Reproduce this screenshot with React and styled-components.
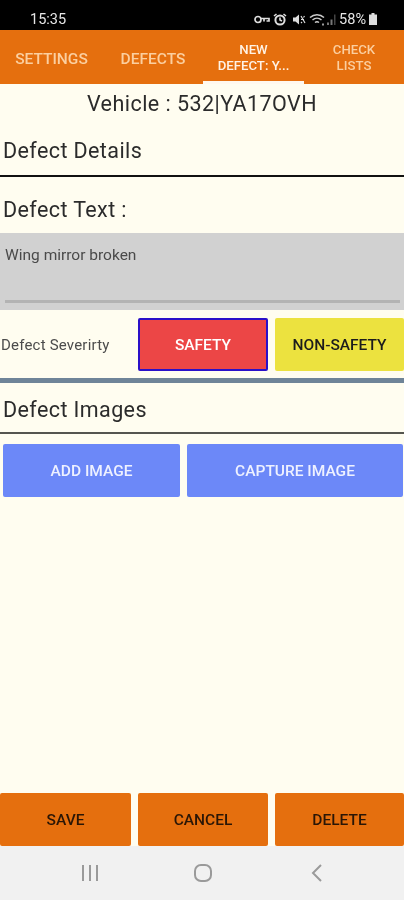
import React from "react";
import styled, { createGlobalStyle } from "styled-components";

const Global = createGlobalStyle`
  html, body { margin: 0; padding: 0; background: #fffdf0; }
  * { box-sizing: border-box; }
`;

const Screen = styled.div`
  width: 404px;
  height: 900px;
  display: flex;
  flex-direction: column;
  overflow: hidden;
  background: #fffdf0;
  font-family: Roboto, "Liberation Sans", sans-serif;
  color: #2b2b2b;
  filter: blur(0.45px);
`;

const StatusBar = styled.div`
  height: 30px;
  flex: none;
  background: #000;
  color: #e6e6e6;
  display: flex;
  align-items: center;
  justify-content: space-between;
  padding: 8px 27px 0 30px;
  font-size: 14.5px;
`;

const StatusRight = styled.div`
  display: flex;
  align-items: center;
  gap: 3px;
`;

const Tabs = styled.div`
  height: 54px;
  flex: none;
  background: #e56f0e;
  display: grid;
  grid-template-columns: 103px 100px 101px 100px;
`;

const Tab = styled.div`
  display: flex;
  align-items: center;
  justify-content: center;
  text-align: center;
  padding: ${(p) => (p.$small ? "4px" : "6px")} 0 0;
  font-size: ${(p) => (p.$small ? "13.2px" : "15.5px")};
  line-height: 16px;
  font-weight: 500;
  color: ${(p) => (p.$active ? "#fff3e6" : "#fbcfa0")};
  border-bottom: 3px solid ${(p) => (p.$active ? "#fff8ee" : "transparent")};
`;

const Vehicle = styled.div`
  height: 38px;
  flex: none;
  display: flex;
  align-items: center;
  justify-content: center;
  font-size: 21.5px;
  letter-spacing: 0.45px;
`;

const SectionHeading = styled.div`
  height: ${(p) => p.$h}px;
  flex: none;
  display: flex;
  align-items: center;
  padding: ${(p) => p.$top}px 0 0 3px;
  font-size: 21.5px;
  letter-spacing: 0.4px;
  border-bottom: 2px solid ${(p) => p.$line || "transparent"};
`;

const TextArea = styled.div`
  height: 77px;
  flex: none;
  background: #d1d1d1;
  padding: 14px 4px 0 5px;
  font-size: 15.5px;
  line-height: 16px;
  color: #4a4a4a;
  display: flex;
  flex-direction: column;
  justify-content: space-between;
`;

const Underline = styled.div`
  height: 3px;
  margin-bottom: 7px;
  background: #b3b3b3;
`;

const SeverityRow = styled.div`
  flex: none;
  height: 68px;
  padding-top: 8px;
  display: grid;
  grid-template-columns: 131px 130px 129px;
  column-gap: 7px;
  grid-auto-rows: 53px;
`;

const SeverityLabel = styled.div`
  display: flex;
  align-items: center;
  padding-left: 1px;
  font-size: 15px;
  letter-spacing: 0.2px;
  color: #4c4c4c;
  white-space: nowrap;
`;

const Button = styled.div`
  height: 53px;
  border-radius: 2px;
  display: flex;
  align-items: center;
  justify-content: center;
  font-size: 15.5px;
  font-weight: 500;
  background: ${(p) => p.$bg};
  color: ${(p) => p.$fg};
  border: ${(p) => (p.$outline ? `2px solid ${p.$outline}` : "none")};
`;

const Divider = styled.div`
  height: 5px;
  flex: none;
  background: #6f8498;
`;

const ImageButtons = styled.div`
  flex: none;
  padding: 10px 1px 0 3px;
  display: grid;
  grid-template-columns: 177px 216px;
  column-gap: 7px;
`;

const Spacer = styled.div`
  flex: 1;
`;

const BottomRow = styled.div`
  flex: none;
  display: grid;
  grid-template-columns: 131px 130px 129px;
  column-gap: 7px;
`;

const NavBar = styled.div`
  height: 54px;
  flex: none;
  background: #f1f1f1;
  display: grid;
  grid-template-columns: 180px 45px 179px;
  align-items: center;
  color: #9a9a9a;
`;

const NavSlot = styled.div`
  display: flex;
  justify-content: ${(p) => p.$justify};
  padding: ${(p) => p.$pad};
`;

const Key = () => (
  <svg width="16" height="11" viewBox="0 0 16 11" fill="none" stroke="#ddd" strokeWidth="1.7">
    <circle cx="4" cy="5.5" r="3" />
    <path d="M7 4.5h8v2.5h-2.5M10 4.5v3" />
  </svg>
);
const Alarm = () => (
  <svg width="14" height="13" viewBox="0 0 14 13" fill="none" stroke="#ddd">
    <circle cx="7" cy="7" r="4.6" strokeWidth="2" />
    <path d="M1 3l2.5-2M13 3l-2.5-2M7 4.5V7l2 1" strokeWidth="1.6" />
  </svg>
);
const Mute = () => (
  <svg width="14" height="13" viewBox="0 0 14 13" fill="#ddd" style={{ marginLeft: 2 }}>
    <path d="M1 4.5h2.5L7 1.5v10L3.5 8.5H1z" />
    <path d="M9 3l4 7M12.5 3l-1 1.5M9 6.5h3M9 10l1-1" stroke="#ddd" strokeWidth="1.2" />
  </svg>
);
const Wifi = () => (
  <svg width="17" height="13" viewBox="0 0 17 13" fill="none" stroke="#ccc" strokeWidth="1.5">
    <path d="M1 4.5c4-3.6 10-3.6 14 0M3.5 7c2.6-2.2 6.4-2.2 9 0M6 9.5c1.2-.9 2.8-.9 4 0" />
    <path d="M13 10.5h2v2h-2z" fill="#999" stroke="none" />
  </svg>
);
const Signal = () => (
  <svg width="9" height="12" viewBox="0 0 9 12" style={{ marginLeft: -2 }}>
    <path d="M0 12V9.5h2V12zM3.5 12V6.5h2V12z" fill="#777" />
    <path d="M7 12V1.5h1.5V12z" fill="#444" />
  </svg>
);
const Battery = () => (
  <svg width="8" height="12" viewBox="0 0 8 12" fill="#ddd">
    <path d="M2.5 0h3v1.5H8V12H0V1.5h2.5z" />
  </svg>
);

export default function App() {
  return (
    <Screen>
      <Global />
      <StatusBar>
        <span>15:35</span>
        <StatusRight>
          <Key />
          <Alarm />
          <Mute />
          <Wifi />
          <Signal />
          <span>58%</span>
          <Battery />
        </StatusRight>
      </StatusBar>
      <Tabs>
        <Tab>SETTINGS</Tab>
        <Tab>DEFECTS</Tab>
        <Tab $active $small>
          NEW
          <br />
          DEFECT: Y...
        </Tab>
        <Tab $small>
          CHECK
          <br />
          LISTS
        </Tab>
      </Tabs>
      <Vehicle>Vehicle : 532|YA17OVH</Vehicle>
      <SectionHeading $h={55} $top={4} $line="#111">Defect Details</SectionHeading>
      <SectionHeading $h={56} $top={10}>Defect Text :</SectionHeading>
      <TextArea>
        <span>Wing mirror broken</span>
        <Underline />
      </TextArea>
      <SeverityRow>
        <SeverityLabel>Defect Severirty</SeverityLabel>
        <Button $bg="#ec4646" $fg="#fff" $outline="#2a10c8">SAFETY</Button>
        <Button $bg="#ece23f" $fg="#1c1c1c">NON-SAFETY</Button>
      </SeverityRow>
      <Divider />
      <SectionHeading $h={51} $top={3} $line="#55554f">Defect Images</SectionHeading>
      <ImageButtons>
        <Button $bg="#6c88f8" $fg="#eef1ff">ADD IMAGE</Button>
        <Button $bg="#6c88f8" $fg="#eef1ff">CAPTURE IMAGE</Button>
      </ImageButtons>
      <Spacer />
      <BottomRow>
        <Button $bg="#e56f0e" $fg="#2a1606">SAVE</Button>
        <Button $bg="#e56f0e" $fg="#2a1606">CANCEL</Button>
        <Button $bg="#e56f0e" $fg="#2a1606">DELETE</Button>
      </BottomRow>
      <NavBar>
        <NavSlot $justify="flex-end" $pad="0 81px 0 0">
          <svg width="18" height="18" viewBox="0 0 18 18" fill="none" stroke="currentColor" strokeWidth="2">
            <path d="M2 1v16M9 1v16M16 1v16" />
          </svg>
        </NavSlot>
        <NavSlot $justify="center" $pad="0">
          <svg width="20" height="20" viewBox="0 0 20 20" fill="none" stroke="currentColor" strokeWidth="2">
            <rect x="2" y="2" width="16" height="16" rx="6" />
          </svg>
        </NavSlot>
        <NavSlot $justify="flex-start" $pad="0 0 0 86px">
          <svg width="12" height="18" viewBox="0 0 12 18" fill="none" stroke="currentColor" strokeWidth="2">
            <path d="M10 1L2 9l8 8" />
          </svg>
        </NavSlot>
      </NavBar>
    </Screen>
  );
}
